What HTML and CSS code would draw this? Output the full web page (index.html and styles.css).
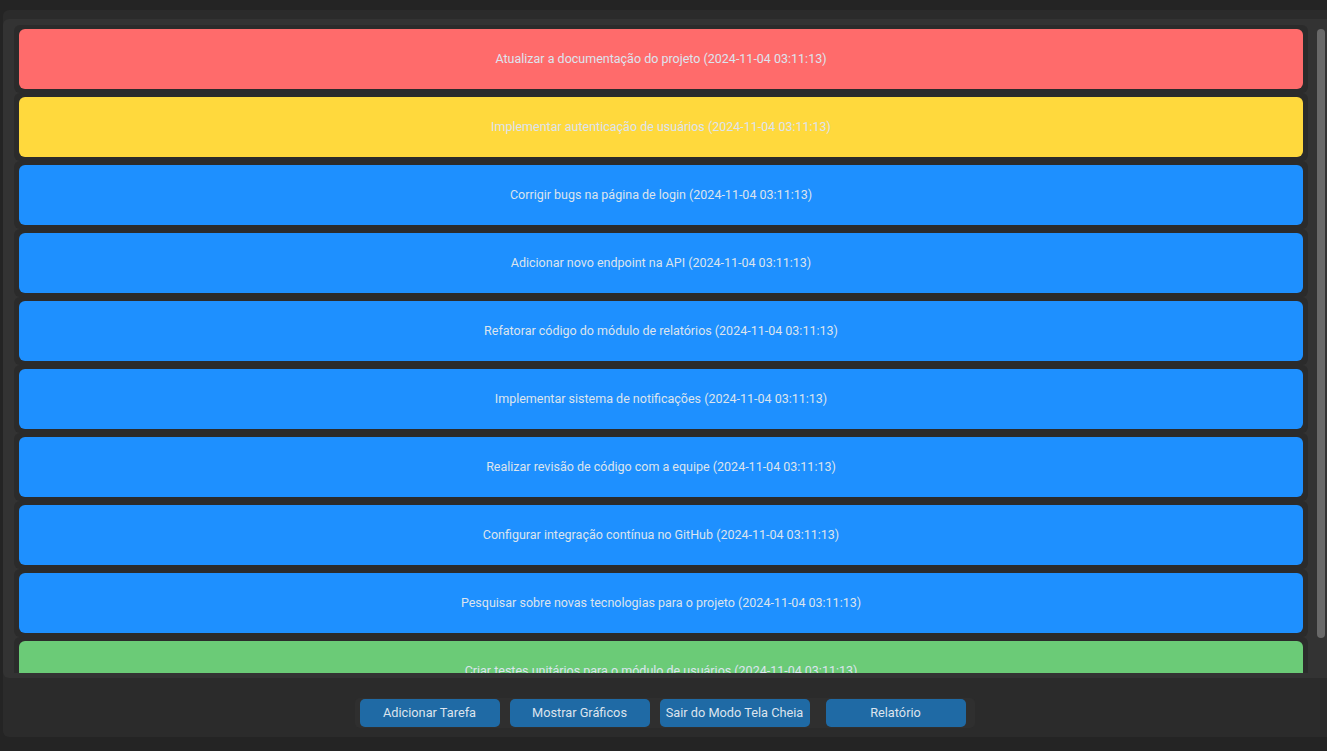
FILE: index.html
```html
<!DOCTYPE html>
<html lang="pt">
<head>
<meta charset="utf-8">
<link rel="stylesheet" href="styles.css">
</head>
<body>
<div class="main">
  <div class="scroll">
    <div class="list">
      <div class="task"><div class="card red">Atualizar a documentação do projeto (2024-11-04 03:11:13)</div></div>
      <div class="task"><div class="card yellow">Implementar autenticação de usuários (2024-11-04 03:11:13)</div></div>
      <div class="task"><div class="card blue">Corrigir bugs na página de login (2024-11-04 03:11:13)</div></div>
      <div class="task"><div class="card blue">Adicionar novo endpoint na API (2024-11-04 03:11:13)</div></div>
      <div class="task"><div class="card blue">Refatorar código do módulo de relatórios (2024-11-04 03:11:13)</div></div>
      <div class="task"><div class="card blue">Implementar sistema de notificações (2024-11-04 03:11:13)</div></div>
      <div class="task"><div class="card blue">Realizar revisão de código com a equipe (2024-11-04 03:11:13)</div></div>
      <div class="task"><div class="card blue">Configurar integração contínua no GitHub (2024-11-04 03:11:13)</div></div>
      <div class="task"><div class="card blue">Pesquisar sobre novas tecnologias para o projeto (2024-11-04 03:11:13)</div></div>
      <div class="task"><div class="card green">Criar testes unitários para o módulo de usuários (2024-11-04 03:11:13)</div></div>
    </div>
    <div class="scrollbar"><div class="thumb"></div></div>
  </div>
  <div class="bottom">
    <div class="bar">
      <div class="btn w140">Adicionar Tarefa</div>
      <div class="btn w140">Mostrar Gráficos</div>
      <div class="btn w150">Sair do Modo Tela Cheia</div>
      <div class="btn w140 last">Relatório</div>
    </div>
  </div>
</div>
</body>
</html>
```

FILE: styles.css
```css
html, body {
  margin: 0;
  padding: 0;
  background: #242424;
  overflow: hidden;
  height: 751px;
}
body {
  padding: 10px 0 0 3px;
  box-sizing: border-box;
  font-family: Roboto, "Liberation Sans", sans-serif;
  font-size: 13px;
  color: #dce4ee;
}
.main {
  width: 1334px;
  height: 727px;
  background: #2b2b2b;
  border-radius: 6px;
  padding-top: 9px;
  box-sizing: border-box;
  display: flex;
  flex-direction: column;
}
.scroll {
  height: 659px;
  background: #333333;
  border-radius: 6px;
  display: flex;
  box-sizing: border-box;
  padding: 6px 0 5px 11px;
  flex-shrink: 0;
}
.list {
  width: 1294px;
  overflow: hidden;
  display: flex;
  flex-direction: column;
}
.task {
  flex-shrink: 0;
  background: #2b2b2b;
  border-radius: 6px;
  padding: 4px 5px;
}
.card {
  height: 60px;
  box-sizing: border-box;
  padding-bottom: 2px;
  border-radius: 6px;
  display: flex;
  align-items: center;
  justify-content: center;
  color: #dce4ee;
  font-size: 12.5px;
}
.red { background: #ff6b6b; }
.yellow { background: #ffd93d; }
.blue { background: #1e90ff; }
.green { background: #6bcb77; }
.scrollbar {
  margin-left: 9px;
  padding-top: 4px;
  width: 8px;
}
.thumb {
  width: 8px;
  height: 609px;
  background: #696969;
  border-radius: 4px;
}
.bottom {
  flex: 1;
  display: flex;
  justify-content: center;
  padding-top: 20px;
  padding-right: 11px;
}
.bar {
  height: 30px;
  background: #2f2f2f;
  border-radius: 5px;
  display: flex;
  align-items: center;
  padding: 0 9px 0 5px;
  gap: 10px;
}
.btn {
  height: 28px;
  box-sizing: border-box;
  padding-bottom: 2px;
  background: #1f6aa5;
  border-radius: 5px;
  display: flex;
  align-items: center;
  justify-content: center;
  color: #dce4ee;
  font-size: 12.75px;
}
.w140 { width: 140px; }
.w150 { width: 150px; }
.last { margin-left: 6px; }
```
